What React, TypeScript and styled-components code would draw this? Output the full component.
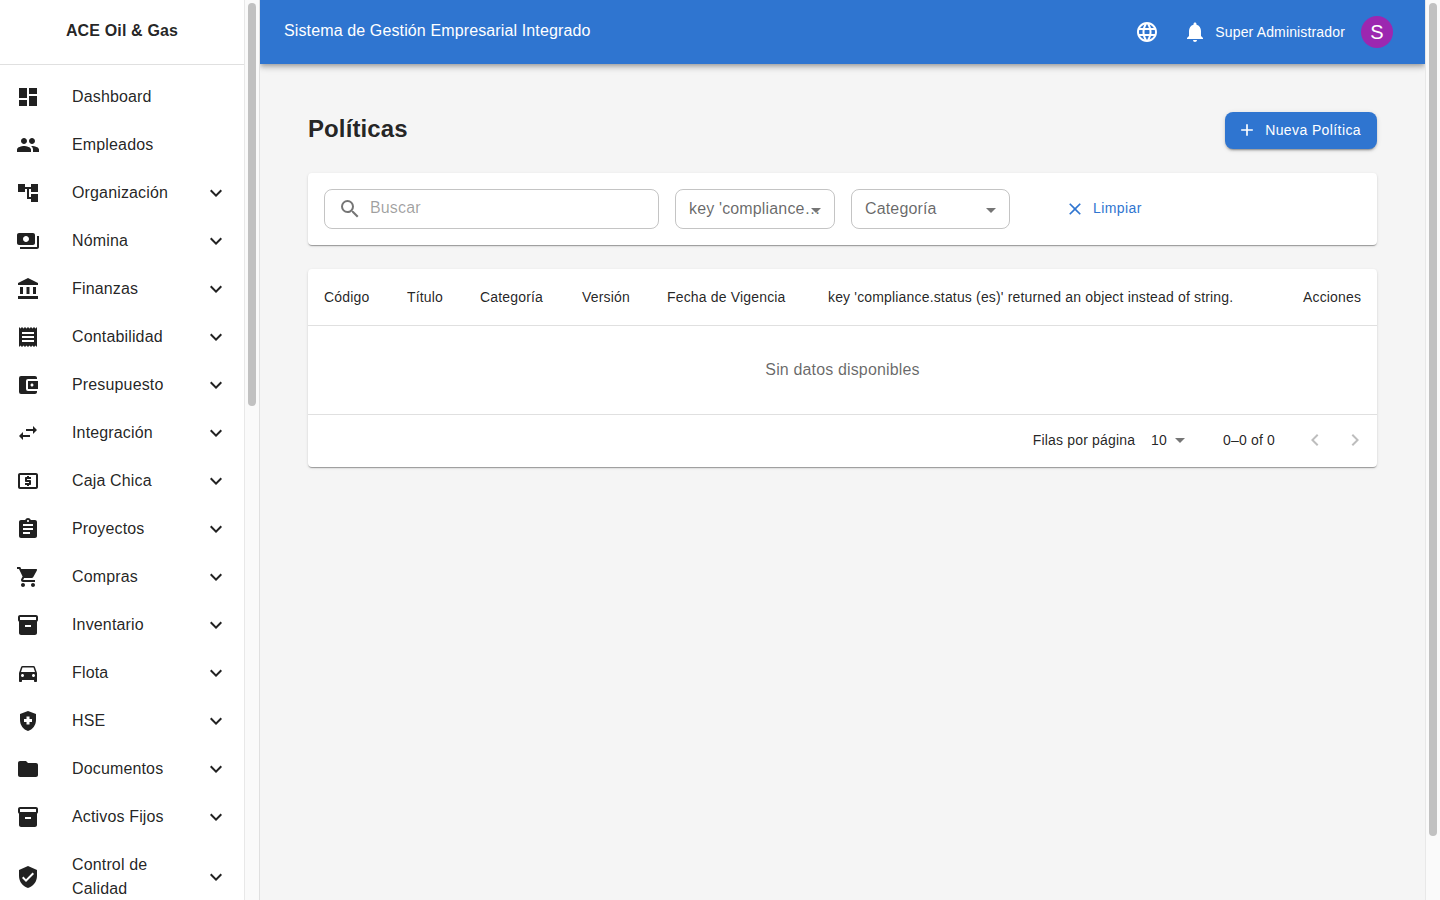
import React from "react";
import styled, { createGlobalStyle } from "styled-components";
import {
  MdDashboard, MdPeople, MdAccountTree, MdPayments, MdAccountBalance, MdReceipt,
  MdAccountBalanceWallet, MdSwapHoriz, MdLocalAtm, MdAssignment, MdShoppingCart,
  MdInventory2, MdDirectionsCar, MdHealthAndSafety, MdFolder, MdVerifiedUser,
  MdExpandMore, MdLanguage, MdNotifications, MdAdd, MdSearch, MdClose,
  MdArrowDropDown, MdChevronLeft, MdChevronRight,
} from "react-icons/md";

const Global = createGlobalStyle`
  html, body { margin: 0; padding: 0; height: 100%; overflow: hidden; }
  body {
    background: #f5f5f5;
    font-family: "Liberation Sans", Arial, sans-serif;
    color: rgba(0,0,0,0.87);
  }
  * { box-sizing: border-box; }
`;

const Shell = styled.div`
  display: flex;
  height: 100vh;
  overflow: hidden;
`;

const Sidebar = styled.aside`
  width: 260px;
  flex-shrink: 0;
  display: flex;
  background: #fff;
  border-right: 1px solid rgba(0,0,0,0.12);
`;

const SidebarBody = styled.div`
  flex: 1;
  min-width: 0;
  overflow: hidden;
`;

const ScrollTrack = styled.div`
  width: 15px;
  flex-shrink: 0;
  background: #fafafa;
  border-left: 1px solid #e8e8e8;
  padding: 3px 3px 0 3px;
`;

const ScrollThumb = styled.div<{ $h: number }>`
  height: ${(p) => p.$h}px;
  border-radius: 4px;
  background: #c1c1c1;
`;

const Brand = styled.div`
  height: 65px;
  display: flex;
  align-items: center;
  justify-content: center;
  border-bottom: 1px solid rgba(0,0,0,0.12);
  font-size: 16px;
  font-weight: 700;
  letter-spacing: 0.15px;
  color: rgba(0,0,0,0.87);
  padding-bottom: 2px;
`;

const NavList = styled.nav`
  padding: 8px 0;
`;

const NavRow = styled.div`
  display: flex;
  align-items: center;
  min-height: 48px;
  padding: 12px 16px;
`;

const NavIcon = styled.span`
  width: 56px;
  flex-shrink: 0;
  display: flex;
  align-items: center;
  color: rgba(0,0,0,0.87);
  font-size: 24px;
  svg { display: block; }
`;

const NavLabel = styled.span`
  flex: 1;
  font-size: 16px;
  line-height: 24px;
  letter-spacing: 0.15px;
  color: rgba(0,0,0,0.87);
`;

const NavChevron = styled.span`
  display: flex;
  font-size: 24px;
  color: rgba(0,0,0,0.87);
`;

const Main = styled.main`
  flex: 1;
  min-width: 0;
  overflow: hidden;
`;

const AppBar = styled.header`
  height: 64px;
  background: #2f75d0;
  color: #fff;
  display: flex;
  align-items: center;
  padding: 0 32px 0 24px;
  box-shadow: 0 2px 4px -1px rgba(0,0,0,.2), 0 4px 5px 0 rgba(0,0,0,.14), 0 1px 10px 0 rgba(0,0,0,.12);
  position: relative;
`;

const AppTitle = styled.div`
  flex: 1;
  font-size: 16px;
  letter-spacing: 0.125px;
  margin-top: -3px;
`;

const BarIcon = styled.span<{ $gap: number }>`
  display: flex;
  font-size: 24px;
  margin-right: ${(p) => p.$gap}px;
`;

const UserName = styled.span`
  font-size: 14px;
  letter-spacing: 0.15px;
  margin-right: 16px;
`;

const Avatar = styled.div`
  width: 32px;
  height: 32px;
  border-radius: 50%;
  background: #9c27b0;
  display: flex;
  align-items: center;
  justify-content: center;
  font-size: 20px;
`;

const Content = styled.div`
  padding: 48px;
`;

const PageHead = styled.div`
  display: flex;
  justify-content: space-between;
  align-items: flex-start;
  margin-bottom: 24px;
`;

const PageTitle = styled.h1`
  margin: 0;
  font-size: 24px;
  font-weight: 700;
  line-height: 34px;
  letter-spacing: 0.1px;
  color: rgba(0,0,0,0.87);
`;

const PrimaryButton = styled.button`
  display: inline-flex;
  align-items: center;
  height: 37px;
  padding: 0 16px 1px 12px;
  border: 0;
  border-radius: 8px;
  background: #2f75d0;
  color: #fff;
  font-family: inherit;
  font-size: 14px;
  letter-spacing: 0.4px;
  box-shadow: 0 3px 1px -2px rgba(0,0,0,.2), 0 2px 2px 0 rgba(0,0,0,.14), 0 1px 5px 0 rgba(0,0,0,.12);
  svg { font-size: 20px; margin-right: 8px; }
`;

const Card = styled.section`
  background: #fff;
  border-radius: 4px;
  box-shadow: 0 2px 1px -1px rgba(0,0,0,.2), 0 1px 1px 0 rgba(0,0,0,.14), 0 1px 3px 0 rgba(0,0,0,.12);
`;

const FilterCard = styled(Card)`
  display: flex;
  align-items: center;
  gap: 16px;
  padding: 16px;
  margin-bottom: 24px;
`;

const Field = styled.div<{ $w: number }>`
  width: ${(p) => p.$w}px;
  height: 40px;
  border: 1px solid rgba(0,0,0,0.23);
  border-radius: 8px;
  display: flex;
  align-items: center;
  position: relative;
  font-size: 16px;
  letter-spacing: 0.15px;
  color: rgba(0,0,0,0.6);
`;

const SearchBox = styled(Field)`
  padding-left: 13px;
  svg { font-size: 24px; color: rgba(0,0,0,0.54); margin-right: 8px; flex-shrink: 0; }
`;

const Placeholder = styled.span`
  color: rgba(0,0,0,0.38);
  margin-top: -3px;
`;

const SelectBox = styled(Field)`
  padding: 0 12px 0 13px;
`;

const SelectText = styled.span`
  white-space: nowrap;
  overflow: hidden;
  text-overflow: ellipsis;
  flex: 1;
  min-width: 0;
`;

const Caret = styled.span`
  position: absolute;
  right: 6px;
  top: 8px;
  display: flex;
  font-size: 24px;
  color: rgba(0,0,0,0.54);
`;

const ClearButton = styled.button`
  display: inline-flex;
  align-items: center;
  border: 0;
  background: none;
  color: #2f75d0;
  font-family: inherit;
  font-size: 14px;
  letter-spacing: 0.4px;
  padding: 0;
  margin-left: 39px;
  margin-top: -2px;
  svg { font-size: 20px; margin-right: 8px; margin-top: 1px; }
`;

const TableRow = styled.div`
  display: flex;
  align-items: center;
  height: 57px;
  padding: 0 16px;
  border-bottom: 1px solid rgba(0,0,0,0.12);
  font-size: 14px;
  letter-spacing: 0.165px;
  color: rgba(0,0,0,0.87);
`;

const HeadCell = styled.div<{ $w?: number }>`
  width: ${(p) => (p.$w ? `${p.$w}px` : "auto")};
  white-space: nowrap;
  flex-shrink: 0;
`;

const Empty = styled.div`
  height: 89px;
  display: flex;
  align-items: center;
  justify-content: center;
  border-bottom: 1px solid rgba(0,0,0,0.12);
  font-size: 16px;
  letter-spacing: 0.15px;
  color: rgba(0,0,0,0.6);
`;

const Pager = styled.div`
  height: 52px;
  display: flex;
  align-items: center;
  justify-content: flex-end;
  padding: 0 10px 2px 0;
  font-size: 14px;
  letter-spacing: 0.17px;
  color: rgba(0,0,0,0.87);
`;

const PerPage = styled.span`
  display: inline-flex;
  align-items: center;
  margin: 0 35px 0 16px;
  svg { font-size: 24px; color: rgba(0,0,0,0.54); margin-left: -1px; margin-right: -4px; }
  span { margin-right: 2px; }
`;

const PageIcons = styled.span`
  display: inline-flex;
  margin-left: 28px;
  gap: 16px;
  font-size: 24px;
  color: rgba(0,0,0,0.26);
`;

const items: [string, React.ComponentType, boolean][] = [
  ["Dashboard", MdDashboard, false],
  ["Empleados", MdPeople, false],
  ["Organización", MdAccountTree, true],
  ["Nómina", MdPayments, true],
  ["Finanzas", MdAccountBalance, true],
  ["Contabilidad", MdReceipt, true],
  ["Presupuesto", MdAccountBalanceWallet, true],
  ["Integración", MdSwapHoriz, true],
  ["Caja Chica", MdLocalAtm, true],
  ["Proyectos", MdAssignment, true],
  ["Compras", MdShoppingCart, true],
  ["Inventario", MdInventory2, true],
  ["Flota", MdDirectionsCar, true],
  ["HSE", MdHealthAndSafety, true],
  ["Documentos", MdFolder, true],
  ["Activos Fijos", MdInventory2, true],
  ["Control de Calidad", MdVerifiedUser, true],
];

export default function App() {
  return (
    <>
      <Global />
      <Shell>
        <Sidebar>
          <SidebarBody>
            <Brand>ACE Oil &amp; Gas</Brand>
            <NavList>
              {items.map(([label, Icon, more]) => (
                <NavRow key={label}>
                  <NavIcon><Icon /></NavIcon>
                  <NavLabel>{label}</NavLabel>
                  {more && <NavChevron><MdExpandMore /></NavChevron>}
                </NavRow>
              ))}
            </NavList>
          </SidebarBody>
          <ScrollTrack><ScrollThumb $h={403} /></ScrollTrack>
        </Sidebar>
        <Main>
          <AppBar>
            <AppTitle>Sistema de Gestión Empresarial Integrado</AppTitle>
            <BarIcon $gap={24}><MdLanguage /></BarIcon>
            <BarIcon $gap={8}><MdNotifications /></BarIcon>
            <UserName>Super Administrador</UserName>
            <Avatar>S</Avatar>
          </AppBar>
          <Content>
            <PageHead>
              <PageTitle>Políticas</PageTitle>
              <PrimaryButton><MdAdd />Nueva Política</PrimaryButton>
            </PageHead>
            <FilterCard>
              <SearchBox $w={335}><MdSearch /><Placeholder>Buscar</Placeholder></SearchBox>
              <SelectBox $w={160}>
                <SelectText>key 'compliance.status (es)' returned an object instead of string.</SelectText>
                <Caret><MdArrowDropDown /></Caret>
              </SelectBox>
              <SelectBox $w={159}>
                <SelectText>Categoría</SelectText>
                <Caret><MdArrowDropDown /></Caret>
              </SelectBox>
              <ClearButton><MdClose />Limpiar</ClearButton>
            </FilterCard>
            <Card>
              <TableRow>
                <HeadCell $w={83}>Código</HeadCell>
                <HeadCell $w={73}>Título</HeadCell>
                <HeadCell $w={102}>Categoría</HeadCell>
                <HeadCell $w={85}>Versión</HeadCell>
                <HeadCell $w={161}>Fecha de Vigencia</HeadCell>
                <HeadCell $w={475}>key 'compliance.status (es)' returned an object instead of string.</HeadCell>
                <HeadCell>Acciones</HeadCell>
              </TableRow>
              <Empty>Sin datos disponibles</Empty>
              <Pager>
                Filas por página
                <PerPage><span>10</span><MdArrowDropDown /></PerPage>
                0–0 of 0
                <PageIcons><MdChevronLeft /><MdChevronRight /></PageIcons>
              </Pager>
            </Card>
          </Content>
        </Main>
        <ScrollTrack><ScrollThumb $h={833} /></ScrollTrack>
      </Shell>
    </>
  );
}
